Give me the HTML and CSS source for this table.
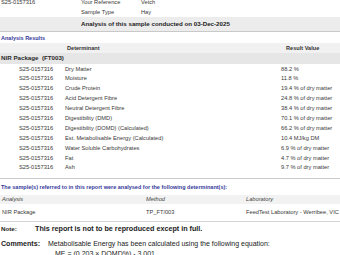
FILE: index.html
```html
<!DOCTYPE html>
<html>
<head>
<meta charset="utf-8">
<title>Analysis Report</title>
<link rel="stylesheet" href="styles.css">
</head>
<body>
<div class="page">
  <div class="meta">
    <div class="meta-row"><span>S25-0157316</span><span>Your Reference</span><span>Vetch</span></div>
    <div class="meta-row"><span></span><span>Sample Type</span><span>Hay</span></div>
  </div>
  <div class="banner">Analysis of this sample conducted on 03-Dec-2025</div>

  <div class="section-title">Analysis Results</div>
  <div class="res-head"><span>Determinant</span><span>Result Value</span></div>
  <div class="pkg">NIR Package&nbsp;&nbsp;(FT003)</div>
  <div class="res-rows">
    <div class="res-row"><span>S25-0157316</span><span>Dry Matter</span><span>88.2 %</span></div>
    <div class="res-row"><span>S25-0157316</span><span>Moisture</span><span>11.8 %</span></div>
    <div class="res-row"><span>S25-0157316</span><span>Crude Protein</span><span>19.4 % of dry matter</span></div>
    <div class="res-row"><span>S25-0157316</span><span>Acid Detergent Fibre</span><span>24.8 % of dry matter</span></div>
    <div class="res-row"><span>S25-0157316</span><span>Neutral Detergent Fibre</span><span>38.4 % of dry matter</span></div>
    <div class="res-row"><span>S25-0157316</span><span>Digestibility (DMD)</span><span>70.1 % of dry matter</span></div>
    <div class="res-row"><span>S25-0157316</span><span>Digestibility (DOMD) (Calculated)</span><span>66.2 % of dry matter</span></div>
    <div class="res-row"><span>S25-0157316</span><span>Est. Metabolisable Energy (Calculated)</span><span>10.4 MJ/kg DM</span></div>
    <div class="res-row"><span>S25-0157316</span><span>Water Soluble Carbohydrates</span><span>6.9 % of dry matter</span></div>
    <div class="res-row"><span>S25-0157316</span><span>Fat</span><span>4.7 % of dry matter</span></div>
    <div class="res-row"><span>S25-0157316</span><span>Ash</span><span>9.7 % of dry matter</span></div>
  </div>

  <div class="section-title second">The sample(s) referred to in this report were analysed for the following determinant(s):</div>
  <div class="det-head"><span>Analysis</span><span>Method</span><span>Laboratory</span></div>
  <div class="det-row"><span>NIR Package</span><span>TP_FT/003</span><span>FeedTest Laboratory - Werribee, VIC</span></div>

  <div class="note"><span class="note-label">Note:</span><span class="note-text">This report is not to be reproduced except in full.</span></div>
  <div class="comments">
    <span class="comments-label">Comments:</span>
    <div class="comments-text">
      <div>Metabolisable Energy has been calculated using the following equation:</div>
      <div class="formula">ME = (0.203 × DOMD%) - 3.001</div>
    </div>
  </div>
</div>
</body>
</html>
```
FILE: styles.css
```css
html, body {
  margin: 0;
  padding: 0;
  overflow: hidden;
  background: #ffffff;
}

body {
  font-family: "Liberation Sans", Arial, sans-serif;
  color: #383838;
  width: 340px;
  height: 255px;
}

.page {
  width: 340px;
  white-space: nowrap;
}

.meta {
  margin-top: -2px;
  font-size: 5.7px;
}

.meta-row {
  display: grid;
  grid-template-columns: 80px 60px auto;
  padding-left: 1px;
  height: 9.5px;
  line-height: 9.5px;
}

.banner {
  height: 14px;
  line-height: 14px;
  background: #ececec;
  border-bottom: 1px solid #c9c9c9;
  padding-left: 81px;
  font-size: 6.2px;
  font-weight: bold;
  color: #222222;
}

.section-title {
  padding-top: 1px;
  padding-left: 1px;
  height: 10px;
  line-height: 11px;
  font-size: 5.5px;
  font-weight: bold;
  color: #35399a;
}

.res-head {
  display: grid;
  grid-template-columns: 219px auto;
  padding-left: 67px;
  height: 10px;
  line-height: 10px;
  background: #f1f1f1;
  font-size: 5.6px;
  font-weight: bold;
  color: #333333;
}

.pkg {
  height: 10.5px;
  line-height: 10.5px;
  padding-left: 1px;
  background: #e6e6e6;
  font-size: 6.2px;
  font-weight: bold;
  color: #2a2a2a;
}

.res-rows {
  padding-top: 1px;
  padding-bottom: 4.5px;
  border-bottom: 1px solid #cccccc;
}

.res-row {
  display: grid;
  grid-template-columns: 46px 216px auto;
  padding-left: 19px;
  height: 9.9px;
  line-height: 9.9px;
  font-size: 5.7px;
}

.section-title.second {
  padding-top: 1px;
  height: 15px;
  line-height: 15px;
}

.det-head,
.det-row {
  display: grid;
  grid-template-columns: 144px 100px auto;
  padding-left: 2px;
  font-size: 5.7px;
}

.det-head {
  height: 9.5px;
  line-height: 9.5px;
  background: #f2f2f2;
  font-style: italic;
  color: #444444;
}

.det-row {
  height: 17px;
  line-height: 17px;
  border-bottom: 1px solid #d4d4d4;
}

.note {
  display: flex;
  align-items: baseline;
  height: 13px;
  line-height: 13px;
  padding-left: 1px;
  font-weight: bold;
  color: #222222;
}

.note-label {
  width: 34px;
  font-size: 6.2px;
}

.note-text {
  font-size: 7.2px;
}

.comments {
  display: flex;
  align-items: baseline;
  padding-top: 4px;
  padding-left: 1px;
  line-height: 9.5px;
  color: #222222;
}

.comments-label {
  width: 47px;
  font-size: 7.1px;
  font-weight: bold;
}

.comments-text {
  font-size: 7px;
}

.formula {
  padding-left: 7px;
}
```
